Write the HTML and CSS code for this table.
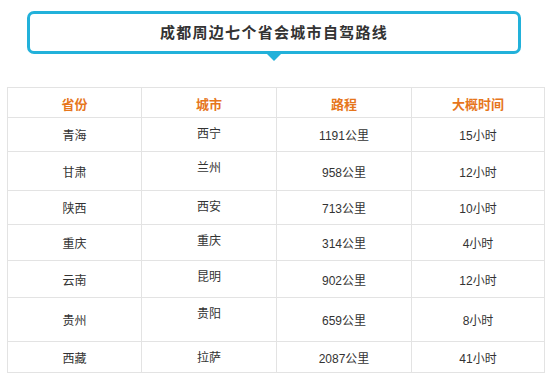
FILE: index.html
```html
<!DOCTYPE html>
<html lang="zh-CN">
<head>
<meta charset="utf-8">
<title>成都周边七个省会城市自驾路线</title>
<link rel="stylesheet" href="styles.css">
</head>
<body>
<div class="page">
  <div class="title-box">
    <h1 class="title">成都周边七个省会城市自驾路线</h1>
  </div>
  <table class="routes">
    <thead>
      <tr class="head-row">
        <th class="c1">省份</th>
        <th class="c2">城市</th>
        <th class="c3">路程</th>
        <th class="c4">大概时间</th>
      </tr>
    </thead>
    <tbody>
      <tr class="row r1"><td>青海</td><td class="city">西宁</td><td>1191公里</td><td>15小时</td></tr>
      <tr class="row r2"><td>甘肃</td><td class="city">兰州</td><td>958公里</td><td>12小时</td></tr>
      <tr class="row r3"><td>陕西</td><td class="city">西安</td><td>713公里</td><td>10小时</td></tr>
      <tr class="row r4"><td>重庆</td><td class="city">重庆</td><td>314公里</td><td>4小时</td></tr>
      <tr class="row r5"><td>云南</td><td class="city">昆明</td><td>902公里</td><td>12小时</td></tr>
      <tr class="row r6"><td>贵州</td><td class="city">贵阳</td><td>659公里</td><td>8小时</td></tr>
      <tr class="row r7"><td>西藏</td><td class="city">拉萨</td><td>2087公里</td><td>41小时</td></tr>
    </tbody>
  </table>
</div>
</body>
</html>
```

FILE: styles.css
```css
html, body {
  margin: 0;
  padding: 0;
  background: #ffffff;
}

body {
  font-family: "Liberation Sans", "Noto Sans CJK SC", sans-serif;
  color: #333333;
}

.page {
  width: 550px;
  padding-top: 11px;
}

.title-box {
  position: relative;
  box-sizing: border-box;
  width: 494px;
  height: 43px;
  margin-left: 27px;
  border: 3px solid #22b1da;
  border-radius: 7px;
  display: flex;
  align-items: center;
  justify-content: center;
}

.title-box::after {
  content: "";
  position: absolute;
  left: 50%;
  bottom: -10px;
  margin-left: -7px;
  width: 0;
  height: 0;
  border-left: 7px solid transparent;
  border-right: 7px solid transparent;
  border-top: 7px solid #22b1da;
}

.title {
  margin: 0;
  font-size: 15px;
  font-weight: bold;
  letter-spacing: 1.3px;
  color: #333333;
  line-height: 20px;
}

.routes {
  margin-top: 33px;
  margin-left: 7px;
  width: 534px;
  border-collapse: collapse;
  table-layout: fixed;
  font-size: 12px;
}

.routes th,
.routes td {
  border: 1px solid #e3e3e3;
  text-align: center;
  vertical-align: middle;
  padding: 0;
}

.routes .c1 { width: 133px; }
.routes .c2 { width: 134px; }
.routes .c3 { width: 134px; }
.routes .c4 { width: 132px; }

.routes th {
  font-size: 13px;
  font-weight: bold;
  color: #e6761c;
  padding-top: 2px;
}

.head-row { height: 30px; }
.r1 { height: 34px; }
.r2 { height: 39px; }
.r3 { height: 34px; }
.r4 { height: 36px; }
.r5 { height: 37px; }
.r6 { height: 44px; }
.r7 { height: 31px; }

.routes td.city {
  vertical-align: top;
  padding-top: 7px;
  line-height: 18px;
}
```
